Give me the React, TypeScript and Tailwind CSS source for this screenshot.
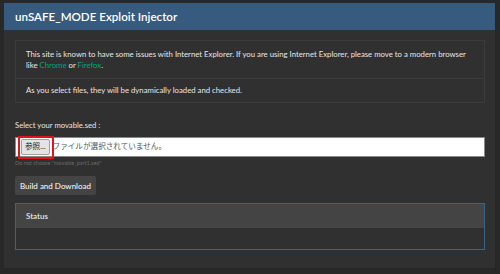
import React from "react";

export default function App() {
  return (
    <div
      className="w-[500px] h-[274px] bg-[#282828] pt-[3px] px-[4px] overflow-hidden"
      style={{ fontFamily: "Lato, 'Noto Sans CJK JP', sans-serif" }}
    >
      <div className="h-[266px] bg-[#303030] border-b border-r border-[#262626] flex flex-col">
        <div className="h-[27px] bg-[#375a7f] flex items-center px-[11px] text-white text-[11.6px] font-semibold leading-none">
          unSAFE_MODE Exploit Injector
        </div>
        <div className="pl-[11px] pr-[10px] pt-[10px] flex flex-col">
          <div className="border border-[#3b3b3b] text-[#e6e6e6] text-[7.75px]">
            <div className="h-[38px] px-[10px] pt-[8px] leading-[11px] border-b border-[#3b3b3b]">
              This site is known to have some issues with Internet Explorer. If you are using Internet Explorer, please move to a modern browser
              <br />
              like <span className="text-[#00a679]">Chrome</span> or <span className="text-[#00a679]">Firefox</span>.
            </div>
            <div className="h-[23px] px-[10px] flex items-center leading-none">
              As you select files, they will be dynamically loaded and checked.
            </div>
          </div>
          <div className="mt-[19px] text-[7.7px] leading-none text-[#e6e6e6]">Select your movable.sed :</div>
          <div className="mt-[7px] h-[20px] bg-white border border-[#888] flex items-center relative">
            <div className="ml-[5px] h-[16px] px-[3px] bg-[#e4e4e4] border border-[#a0a0a0] rounded-[2px] text-[7.6px] text-[#222] flex items-center leading-none">
              参照...
            </div>
            <div className="ml-[3px] text-[7.6px] text-[#555] leading-none">ファイルが選択されていません。</div>
            <div className="absolute left-[2px] top-[-2px] w-[36px] h-[23px] border-2 border-[#e0141e]" />
          </div>
          <div className="mt-[4px] text-[5.5px] text-[#6a6a6a] leading-none">Do not choose "movable_part1.sed"</div>
          <div className="mt-[10px] w-[81px] h-[19px] bg-[#444] rounded-[2px] text-white text-[8px] flex items-center justify-center leading-none">
            Build and Download
          </div>
          <div className="mt-[8px] h-[47px] border border-[#3d6384] flex flex-col">
            <div className="h-[24px] bg-[#444] px-[10px] flex items-center text-[8px] font-semibold text-[#e6e6e6] leading-none">
              Status
            </div>
            <div className="flex-1 bg-[#303030]" />
          </div>
        </div>
      </div>
    </div>
  );
}
